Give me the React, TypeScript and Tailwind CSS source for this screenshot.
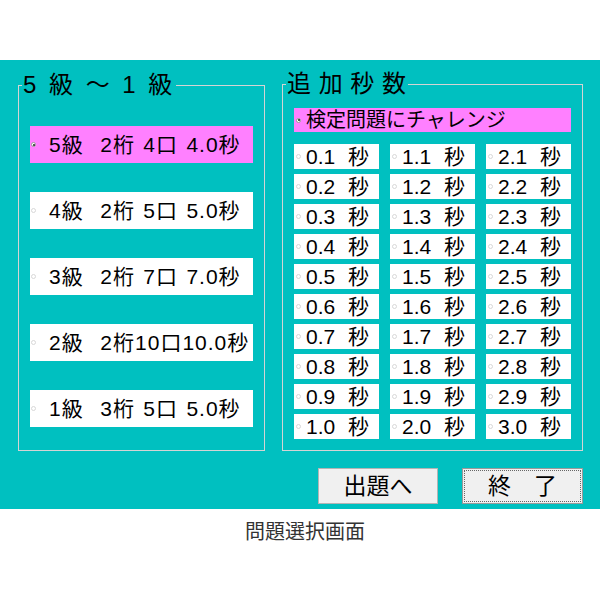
import React from "react";

const FONT = "font-['Liberation_Sans','Noto_Sans_CJK_JP',sans-serif]";

function Radio({ checked }: { checked?: boolean }) {
  return checked ? (
    <span className="w-[5px] h-[5px] rounded-full bg-white border border-[#9a9a9a] flex items-center justify-center shrink-0">
      <span className="w-[2px] h-[2px] rounded-full bg-[#222]" />
    </span>
  ) : (
    <span className="w-[5px] h-[5px] rounded-full bg-white border border-[#d8d8d8] shrink-0" />
  );
}

const levels = [
  { t: "5級  2桁 4口 4.0秒", on: true },
  { t: "4級  2桁 5口 5.0秒" },
  { t: "3級  2桁 7口 7.0秒" },
  { t: "2級  2桁10口10.0秒" },
  { t: "1級  3桁 5口 5.0秒" },
];

const secs: string[] = [];
for (let r = 0; r < 10; r++) {
  for (let c = 0; c < 3; c++) {
    const v = c + (r + 1) / 10;
    secs.push(v.toFixed(1));
  }
}

export default function App() {
  return (
    <div className={`w-[600px] h-[600px] bg-white text-black ${FONT}`}>
      <div className="h-[60px]" />
      <div className="h-[449px] bg-[#00c0c0] flex flex-col">
        <div className="flex items-start pl-[18px] pt-[10px] gap-[17px]">
          <fieldset className="mt-[1px] w-[247px] h-[380px] border border-[#d4d4d4] pl-[11px] pr-0 pb-0">
            <legend className="ml-[-8px] px-[1px] text-[24px] leading-[28px] tracking-[3px] whitespace-pre">
              5 級 ～ 1 級
            </legend>
            <div className="mt-[27px] flex flex-col gap-[29px]">
              {levels.map((l) => (
                <div
                  key={l.t}
                  className={`w-[223px] h-[37px] flex items-center pl-[1px] ${l.on ? "bg-[#ff80ff]" : "bg-white"}`}
                >
                  <Radio checked={l.on} />
                  <span className="ml-[13px] text-[21px] leading-none whitespace-pre tracking-[1px] [word-spacing:1.5px]">
                    {l.t}
                  </span>
                </div>
              ))}
            </div>
          </fieldset>
          <fieldset className="w-[301px] h-[381px] border border-[#d4d4d4] pl-[11px] pr-0 pb-0">
            <legend className="ml-[-8px] px-[1px] text-[24px] leading-[28px] tracking-[0.5px] whitespace-pre">
              追 加 秒 数
            </legend>
            <div className="mt-[10px] w-[277px] h-[24px] bg-[#ff80ff] flex items-center pl-[2px]">
              <Radio checked />
              <span className="ml-[5px] text-[20px] leading-none">検定問題にチャレンジ</span>
            </div>
            <div className="mt-[12px] grid grid-cols-[85px_85px_85px] gap-x-[11px] gap-y-[5px]">
              {secs.map((s) => (
                <div key={s} className="h-[25px] bg-white flex items-center pl-[2px]">
                  <Radio />
                  <span className="ml-[5px] text-[21px] leading-none whitespace-pre [word-spacing:7px]">
                    {s + " 秒"}
                  </span>
                </div>
              ))}
            </div>
          </fieldset>
        </div>
        <div className="flex justify-end gap-[24px] pr-[17px] mt-[17px]">
          <button className="w-[120px] h-[36px] bg-[#f0f0f0] border border-[#b4b4b4] text-[23px] leading-none">
            出題へ
          </button>
          <button className="w-[121px] h-[36px] bg-[#f0f0f0] border border-[#9a9a9a] text-[23px] leading-none outline outline-1 outline-dotted outline-[#666] outline-offset-[-3px] whitespace-pre">
            終　了
          </button>
        </div>
      </div>
      <div className="mt-[8px] pl-[10px] text-center text-[20px] leading-[28px] text-[#333] font-['Noto_Sans_CJK_JP',sans-serif]">
        問題選択画面
      </div>
    </div>
  );
}
